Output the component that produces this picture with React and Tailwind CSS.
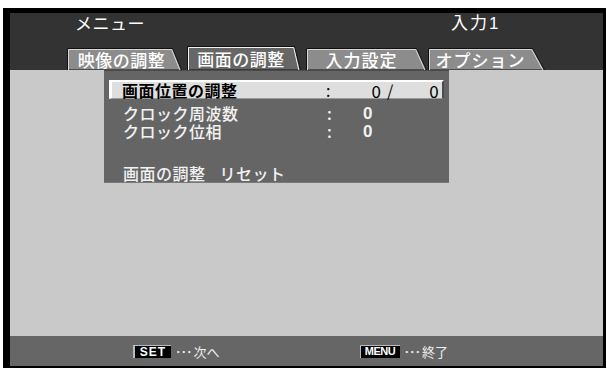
import React from "react";

const JP = { fontFamily: '"Noto Sans CJK JP", "Noto Sans", sans-serif' };

function TabShape({ w, h, slant, active }) {
  const outer = `0.5,${h} 0.5,0.5 ${w - slant - 0.5},0.5 ${w - 0.5},${h}`;
  const inner = `1.5,${h} 1.5,1.5 ${w - slant - 1.3},1.5 ${w - 2.2},${h}`;
  return (
    <svg className="absolute inset-0" width={w} height={h} viewBox={`0 0 ${w} ${h}`}>
      <polygon points={outer} fill={active ? "#676767" : "#8c8c8c"} stroke="#111" strokeWidth="1" />
      <polyline points={inner} fill="none" stroke={active ? "#f4f4f4" : "#d8d8d8"} strokeWidth="1" />
    </svg>
  );
}

export default function App() {
  return (
    <div className="w-[607px] h-[370px] bg-white pt-[8px] pl-[3px] pr-[1px] pb-[2px]" style={JP}>
      <div className="h-full border-black border-l-[7px] border-t-[5px] border-r-[3px] border-b-[2px] flex flex-col">
        {/* header */}
        <div className="h-[57px] bg-[#333333] flex flex-col shrink-0">
          <div className="h-[18px] flex items-center text-[17px] text-white leading-none font-normal">
            <span className="ml-[65px] tracking-[0.5px]">メニュー</span>
            <span className="ml-[306px] tracking-[2px]">入力<span className="font-['Liberation_Sans']">1</span></span>
          </div>
          <div className="mt-[15px] h-[24px] flex items-end">
            <div className="relative ml-[57px] w-[115px] h-[22px] flex items-center justify-center pr-[6px] text-[17px] text-white leading-none font-medium tracking-[0.5px]">
              <TabShape w={115} h={22} slant={9} />
              <span className="relative">映像の調整</span>
            </div>
            <div className="relative ml-[5px] w-[114px] h-[24px] flex items-center justify-center pr-[6px] pt-[1px] text-[17px] text-white leading-none font-medium tracking-[0.5px]">
              <TabShape w={114} h={24} slant={6} active />
              <span className="relative">画面の調整</span>
            </div>
            <div className="relative ml-[5px] w-[121px] h-[22px] flex items-center justify-center pr-[10px] text-[17px] text-white leading-none font-medium tracking-[1px]">
              <TabShape w={121} h={22} slant={10} />
              <span className="relative">入力設定</span>
            </div>
            <div className="relative ml-[1px] w-[117px] h-[22px] flex items-center justify-center pr-[12px] text-[17px] text-white leading-none font-medium tracking-[1px]">
              <TabShape w={117} h={22} slant={12} />
              <span className="relative">オプション</span>
            </div>
          </div>
        </div>

        {/* main */}
        <div className="flex-1 bg-[#c9c9c9] flex items-start">
          <div className="ml-[94px] w-[345px] h-[113px] bg-[#656565] border-t border-[#4a4a4a] border-b-[1px] border-b-[#7a7a7a] flex flex-col text-[16px] leading-none">
            <div className="mt-[9px] mx-[5px] h-[19px] bg-[#dedede] border-t-[2px] border-l-[3px] border-white border-r-[2px] border-r-[#4c4c4c] border-b border-b-[#9a9a9a] flex items-center text-black">
              <span className="ml-[10px] w-[204px] font-bold tracking-[0.5px]">画面位置の調整</span>
              <span className="w-[35px] font-normal">:</span>
              <span className="w-[20px] font-normal text-right text-[17px]">0</span>
              <span className="ml-[6px] font-normal">/</span>
              <span className="ml-[36px] font-normal text-[17px]">0</span>
            </div>
            <div className="mt-[5px] h-[18px] flex items-center text-[#f2f2f2] font-medium">
              <span className="ml-[19px] w-[204px] tracking-[0.5px]">クロック周波数</span>
              <span className="w-[36px]">:</span>
              <span className="font-bold font-['Liberation_Sans'] text-[17px]">0</span>
            </div>
            <div className="h-[18px] flex items-center text-[#f2f2f2] font-medium">
              <span className="ml-[19px] w-[204px] tracking-[0.5px]">クロック位相</span>
              <span className="w-[36px]">:</span>
              <span className="font-bold font-['Liberation_Sans'] text-[17px]">0</span>
            </div>
            <div className="mt-[24px] h-[18px] flex items-center text-[#f2f2f2] font-medium tracking-[0.5px]">
              <span className="ml-[19px]">画面の調整</span>
              <span className="ml-[14px]">リセット</span>
            </div>
          </div>
        </div>

        {/* footer */}
        <div className="h-[30px] bg-[#666666] shrink-0 flex items-center text-[13px] text-[#eeeeee] leading-none">
          <span className="ml-[123px] w-[38px] h-[13px] bg-black border-l-[2px] border-t border-[#bbbbbb] flex items-center justify-center font-['Liberation_Sans'] font-bold text-[12px] text-white tracking-[1px]">SET</span>
          <span className="ml-[4px] tracking-[-1px]">･･･</span>
          <span className="ml-[2px]">次へ</span>
          <span className="ml-[140px] w-[40px] h-[13px] bg-black border-l border-t border-[#bbbbbb] flex items-center justify-center font-['Liberation_Sans'] font-bold text-[11px] text-white tracking-[-0.5px]">MENU</span>
          <span className="ml-[4px] tracking-[-1px]">･･･</span>
          <span className="ml-[2px]">終了</span>
        </div>
      </div>
    </div>
  );
}
